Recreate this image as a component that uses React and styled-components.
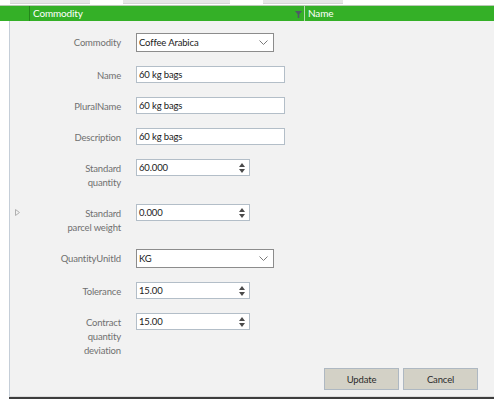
import React from 'react'
import styled, { createGlobalStyle } from 'styled-components'

const GlobalStyle = createGlobalStyle`
    html, body {
        margin: 0;
        padding: 0;
        background: #fff;
    }
    body {
        font-family: Lato, "Noto Sans", sans-serif;
    }
`

const Page = styled.div`
    width: 494px;
    height: 401px;
    display: flex;
    flex-direction: column;
    background: #fff;
    overflow: hidden;
`

const TabStrip = styled.div`
    height: 5px;
    display: flex;
    align-items: flex-start;
`
const Tab = styled.div`
    height: 4px;
    width: ${p => p.$width}px;
    margin-left: ${p => p.$offset}px;
    background: #e6e6e6;
    border-bottom: 1px solid #d6d6d6;
    box-sizing: border-box;
`

const HeaderRow = styled.div`
    height: 16px;
    display: flex;
    background: #34b027;
    border-top: 1px solid #b9c9b5;
    box-sizing: border-box;
    color: #fff;
    font-size: 10px;
    letter-spacing: -0.15px;
    line-height: 15px;
`
const IndentCell = styled.div`
    width: 29px;
    border-right: 1px solid #24861b;
`
const HeaderCell = styled.div`
    display: flex;
    align-items: center;
    padding-left: 3px;
    width: ${p => (p.$width ? `${p.$width}px` : 'auto')};
    flex: ${p => (p.$width ? 'none' : '1')};
    box-sizing: border-box;
    border-right: ${p => (p.$width ? '1px solid #b6dcb0' : 'none')};
`
const HeaderTitle = styled.span`
    flex: 1;
`
const FilterIcon = styled.svg`
    width: 7px;
    height: 7px;
    margin-right: 2px;
    margin-top: 1px;
`

const Detail = styled.div`
    flex: 1;
    display: flex;
    margin-left: 9px;
    background: #f2f2f2;
    border-left: 1px solid #c5ced8;
    border-bottom: 1px solid #dcdcdc;
`
const Gutter = styled.div`
    width: 14px;
    display: flex;
    align-items: center;
    justify-content: center;
    padding-top: 7px;
    box-sizing: border-box;
`
const Body = styled.div`
    flex: 1;
    display: flex;
    flex-direction: column;
    padding: 12px 16px 0 17px;
`
const Form = styled.div`
    display: flex;
    flex-direction: column;
    gap: 14px;
`
const Row = styled.div`
    display: flex;
    align-items: flex-start;
    gap: 15px;
`
const Label = styled.div`
    width: 80px;
    text-align: right;
    font-size: 9.5px;
    letter-spacing: -0.15px;
    line-height: 14px;
    padding-top: 3px;
    color: #707070;
`
const Box = styled.div`
    width: ${p => p.$width}px;
    height: ${p => (p.$select ? 19 : 17)}px;
    box-sizing: border-box;
    background: #fff;
    border: 1px solid ${p => (p.$select ? '#8c8c8c' : '#b3bec8')};
    display: flex;
    align-items: center;
    padding-left: 2px;
    font-size: 9.5px;
    letter-spacing: -0.15px;
    color: #1a1a1a;
`
const Value = styled.span`
    flex: 1;
`
const Chevron = styled.svg`
    width: 9px;
    height: 5px;
    margin-right: 5px;
`
const Spinner = styled.div`
    display: flex;
    flex-direction: column;
    align-items: center;
    gap: 2px;
    width: 11px;
    margin-right: 2px;
`

const ButtonBar = styled.div`
    display: flex;
    justify-content: flex-end;
    gap: 4px;
    margin-top: 10px;
`
const Button = styled.button`
    width: 75px;
    height: 22px;
    background: #d3d1c6;
    border: 1px solid #aeb8c2;
    font-family: Lato, "Noto Sans", sans-serif;
    font-size: 9.5px;
    letter-spacing: -0.15px;
    color: #2b2b2b;
    padding: 0;
`

const BottomLine = styled.div`
    height: 2px;
    margin-left: 9px;
    background: #3d3d3d;
    margin-bottom: 2px;
`

const Select = ({ value, width }) => (
    <Box $select $width={width}>
        <Value>{value}</Value>
        <Chevron viewBox="0 0 9 5">
            <path d="M0.5 0.5 L4.5 4.5 L8.5 0.5" fill="none" stroke="#7a7a7a" strokeWidth="1" />
        </Chevron>
    </Box>
)

const NumberBox = ({ value }) => (
    <Box $width={114}>
        <Value>{value}</Value>
        <Spinner>
            <svg width="6" height="4" viewBox="0 0 6 4"><path d="M3 0 L6 4 L0 4 Z" fill="#4a4a4a" /></svg>
            <svg width="6" height="4" viewBox="0 0 6 4"><path d="M0 0 L6 0 L3 4 Z" fill="#4a4a4a" /></svg>
        </Spinner>
    </Box>
)

const Field = ({ label, children }) => (
    <Row>
        <Label>
            {label.map((line, i) => (
                <div key={i}>{line}</div>
            ))}
        </Label>
        {children}
    </Row>
)

const App = () => {
    return (
        <Page>
            <GlobalStyle />
            <TabStrip>
                <Tab $offset={10} $width={80} />
                <Tab $offset={33} $width={107} />
                <Tab $offset={33} $width={80} />
            </TabStrip>
            <HeaderRow>
                <IndentCell />
                <HeaderCell $width={275}>
                    <HeaderTitle>Commodity</HeaderTitle>
                    <FilterIcon viewBox="0 0 7 7">
                        <path d="M0 0 H7 L4.3 3.2 V7 H2.7 V3.2 Z" fill="#4d5a66" />
                    </FilterIcon>
                </HeaderCell>
                <HeaderCell>Name</HeaderCell>
            </HeaderRow>
            <Detail>
                <Gutter>
                    <svg width="5" height="7" viewBox="0 0 5 7">
                        <path d="M0.5 0.5 L4.5 3.5 L0.5 6.5 Z" fill="none" stroke="#b0b0b0" strokeWidth="1" />
                    </svg>
                </Gutter>
                <Body>
                    <Form>
                        <Field label={['Commodity']}>
                            <Select value="Coffee Arabica" width={138} />
                        </Field>
                        <Field label={['Name']}>
                            <Box $width={149}>60 kg bags</Box>
                        </Field>
                        <Field label={['PluralName']}>
                            <Box $width={149}>60 kg bags</Box>
                        </Field>
                        <Field label={['Description']}>
                            <Box $width={149}>60 kg bags</Box>
                        </Field>
                        <Field label={['Standard', 'quantity']}>
                            <NumberBox value="60.000" />
                        </Field>
                        <Field label={['Standard', 'parcel weight']}>
                            <NumberBox value="0.000" />
                        </Field>
                        <Field label={['QuantityUnitId']}>
                            <Select value="KG" width={138} />
                        </Field>
                        <Field label={['Tolerance']}>
                            <NumberBox value="15.00" />
                        </Field>
                        <Field label={['Contract', 'quantity', 'deviation']}>
                            <NumberBox value="15.00" />
                        </Field>
                    </Form>
                    <ButtonBar>
                        <Button>Update</Button>
                        <Button>Cancel</Button>
                    </ButtonBar>
                </Body>
            </Detail>
            <BottomLine />
        </Page>
    )
}

export default App
